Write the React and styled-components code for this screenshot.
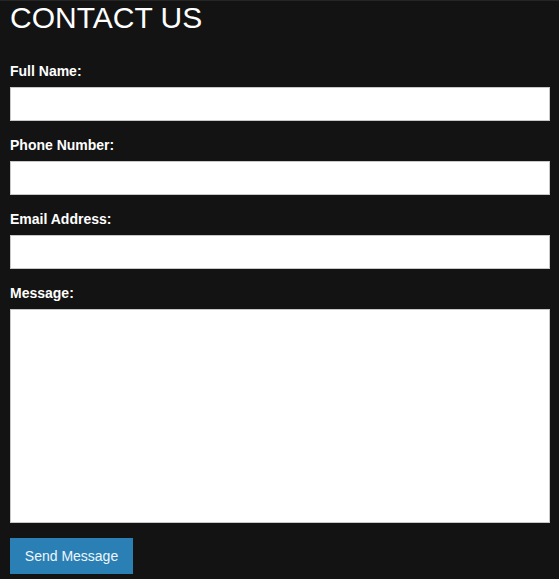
import React from "react";
import styled, { createGlobalStyle } from "styled-components";

const Global = createGlobalStyle`
  html, body {
    margin: 0;
    padding: 0;
    background: #131313;
    font-family: "Liberation Sans", Arial, sans-serif;
  }
  #root { min-height: 579px; }
`;

const Page = styled.div`
  min-height: 579px;
  box-sizing: border-box;
  border-top: 1px solid #262626;
  padding: 0 9px 5px 10px;
  background: #131313;
`;

const Title = styled.h1`
  margin: 0 0 28px;
  font-size: 30px;
  font-weight: normal;
  line-height: 34px;
  color: #fff;
`;

const Form = styled.form`
  display: flex;
  flex-direction: column;
  width: 540px;
`;

const Field = styled.div`
  display: flex;
  flex-direction: column;
  margin-bottom: ${(p) => (p.$last ? "15px" : "16px")};
`;

const Label = styled.label`
  display: block;
  font-size: 14px;
  font-weight: bold;
  line-height: 16px;
  color: #fff;
  margin-bottom: 8px;
`;

const Input = styled.input`
  box-sizing: border-box;
  width: 100%;
  height: 34px;
  margin: 0;
  border: 1px solid #c8c8c8;
  background: #fff;
  padding: 6px 8px;
  font: 14px "Liberation Sans", Arial, sans-serif;
  outline: none;
`;

const TextArea = styled.textarea`
  box-sizing: border-box;
  width: 100%;
  height: 214px;
  margin: 0;
  border: 1px solid #c8c8c8;
  background: #fff;
  padding: 6px 8px;
  resize: none;
  font: 14px "Liberation Sans", Arial, sans-serif;
  outline: none;
  display: block;
`;

const Button = styled.button`
  align-self: flex-start;
  width: 123px;
  height: 36px;
  border: none;
  background: #2a80b4;
  color: #eef5fb;
  font: 14px "Liberation Sans", Arial, sans-serif;
  padding: 0;
  cursor: pointer;
`;

export default function App() {
  return (
    <Page>
      <Global />
      <Title>CONTACT US</Title>
      <Form onSubmit={(e) => e.preventDefault()}>
        <Field>
          <Label htmlFor="name">Full Name:</Label>
          <Input id="name" type="text" />
        </Field>
        <Field>
          <Label htmlFor="phone">Phone Number:</Label>
          <Input id="phone" type="text" />
        </Field>
        <Field>
          <Label htmlFor="email">Email Address:</Label>
          <Input id="email" type="text" />
        </Field>
        <Field $last>
          <Label htmlFor="msg">Message:</Label>
          <TextArea id="msg" />
        </Field>
        <Button type="submit">Send Message</Button>
      </Form>
    </Page>
  );
}
